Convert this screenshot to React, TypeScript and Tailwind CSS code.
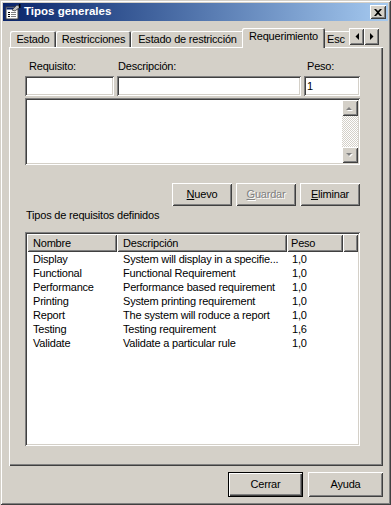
import React from 'react';

const raised =
  'shadow-[inset_1px_1px_#ffffff,inset_-1px_-1px_#404040,inset_2px_2px_#d4d0c8,inset_-2px_-2px_#808080]';
const sunken =
  'shadow-[inset_1px_1px_#808080,inset_-1px_-1px_#ffffff,inset_2px_2px_#404040,inset_-2px_-2px_#d4d0c8]';

const rows = [
  { name: 'Display', desc: 'System will display in a specifie...', peso: '1,0' },
  { name: 'Functional', desc: 'Functional Requirement', peso: '1,0' },
  { name: 'Performance', desc: 'Performance based requirement', peso: '1,0' },
  { name: 'Printing', desc: 'System printing requirement', peso: '1,0' },
  { name: 'Report', desc: 'The system will roduce a report', peso: '1,0' },
  { name: 'Testing', desc: 'Testing requirement', peso: '1,6' },
  { name: 'Validate', desc: 'Validate a particular rule', peso: '1,0' },
];

function AppIcon() {
  return (
    <svg width="16" height="16" viewBox="0 0 16 16">
      <rect x="1" y="3" width="12" height="12" fill="#ffffff" stroke="#404040" />
      <rect x="1.5" y="3.5" width="11" height="2" fill="#0a246a" />
      <rect x="3" y="8" width="2" height="1" fill="#000" />
      <rect x="6" y="8" width="5" height="1" fill="#808080" />
      <rect x="3" y="10" width="2" height="1" fill="#000" />
      <rect x="6" y="10" width="5" height="1" fill="#808080" />
      <rect x="3" y="12" width="2" height="1" fill="#000" />
      <rect x="6" y="12" width="5" height="1" fill="#808080" />
      <path d="M7 6 L12 1 L15 3 L10 7 Z" fill="#c0c0c0" stroke="#404040" strokeWidth="0.8" />
      <rect x="14" y="0" width="1.5" height="4" fill="#000" />
    </svg>
  );
}

function Tab({ label, w, active }: { label: string; w: string; active?: boolean }) {
  return (
    <div
      className={`${w} shrink-0 flex items-center justify-center whitespace-nowrap rounded-t-[2px] ${
        active
          ? 'h-[20px] -mx-[2px] -mb-[1px] relative z-10 bg-[#d4d0c8] pb-[3px] shadow-[inset_1px_1px_#ffffff,inset_-1px_0_#404040,inset_-2px_0_#808080]'
          : 'h-[16px] pt-[1px] shadow-[inset_1px_1px_#ffffff,inset_-1px_0_#404040,inset_-2px_0_#808080]'
      }`}
    >
      {label}
    </div>
  );
}

function Btn({
  children,
  w,
  h = 'h-[23px]',
  focused,
  disabled,
}: {
  children: React.ReactNode;
  w: string;
  h?: string;
  focused?: boolean;
  disabled?: boolean;
}) {
  return (
    <div
      className={`${w} ${h} flex items-center justify-center ${
        focused
          ? 'border border-black shadow-[inset_1px_1px_#ffffff,inset_-1px_-1px_#404040,inset_-2px_-2px_#808080]'
          : raised
      } ${disabled ? 'text-[#808080] [text-shadow:1px_1px_#ffffff]' : ''}`}
    >
      {children}
    </div>
  );
}

export default function App() {
  return (
    <div
      className={`w-[391px] h-[505px] bg-[#d4d0c8] p-[3px] flex flex-col text-black text-[11px] tracking-[-0.2px] font-['Liberation_Sans',Arial,sans-serif] shadow-[inset_1px_1px_#d4d0c8,inset_-1px_-1px_#404040,inset_2px_2px_#ffffff,inset_-2px_-2px_#808080]`}
    >
      {/* Title bar */}
      <div className="h-[18px] shrink-0 flex items-center bg-linear-to-r from-[#0a246a] to-[#a6caf0] pl-[2px] pr-[2px]">
        <AppIcon />
        <span className="ml-[3px] text-white font-bold text-[11.5px] tracking-normal">Tipos generales</span>
        <div className={`ml-auto w-[16px] h-[14px] bg-[#d4d0c8] flex items-center justify-center ${raised}`}>
          <svg width="8" height="7" viewBox="0 0 8 7">
            <path d="M0 0 L2 0 L4 2 L6 0 L8 0 L5 3.5 L8 7 L6 7 L4 5 L2 7 L0 7 L3 3.5 Z" fill="#000" />
          </svg>
        </div>
      </div>

      {/* Tabs */}
      <div className="mt-[7px] ml-[7px] mr-[9px] h-[19px] shrink-0 flex items-end relative z-10">
        <div className="flex-1 flex items-end overflow-hidden h-[20px] -mb-[1px] pb-[1px]">
          <Tab label="Estado" w="w-[46px]" />
          <Tab label="Restricciones" w="w-[75px]" />
          <Tab label="Estado de restricción" w="w-[113px]" />
          <Tab label="Requerimiento" w="w-[83px]" active />
          <div className="w-[60px] h-[16px] shrink-0 pl-[4px] pt-[1px] flex items-center whitespace-nowrap shadow-[inset_1px_1px_#ffffff]">
            Esc
          </div>
        </div>
        <div className="self-start flex">
          <div className={`w-[15px] h-[17px] flex items-center justify-center bg-[#d4d0c8] ${raised}`}>
            <svg width="4" height="7" viewBox="0 0 4 7">
              <path d="M4 0 L4 7 L0.5 3.5 Z" fill="#000" />
            </svg>
          </div>
          <div className={`w-[15px] h-[17px] flex items-center justify-center bg-[#d4d0c8] ${raised}`}>
            <svg width="4" height="7" viewBox="0 0 4 7">
              <path d="M0 0 L0 7 L3.5 3.5 Z" fill="#000" />
            </svg>
          </div>
        </div>
      </div>

      {/* Tab panel */}
      <div className="ml-[6px] mr-[5px] h-[419px] shrink-0 pt-[12px] pl-[16px] pr-[23px] flex flex-col shadow-[inset_1px_1px_#ffffff,inset_-1px_-1px_#404040,inset_-2px_-2px_#808080]">
        <div className="flex gap-[3px] h-[14px] leading-[14px]">
          <div className="w-[89px] pl-[4px]">Requisito:</div>
          <div className="w-[184px] pl-[1px]">Descripción:</div>
          <div className="w-[56px] pl-[3px]">Peso:</div>
        </div>
        <div className="mt-[3px] flex gap-[3px]">
          <div className={`w-[89px] h-[20px] bg-white ${sunken}`} />
          <div className={`w-[184px] h-[20px] bg-white ${sunken}`} />
          <div className={`w-[56px] h-[20px] bg-white pl-[3px] flex items-center ${sunken}`}>1</div>
        </div>
        <div className={`mt-[2px] h-[67px] bg-white flex justify-end p-[2px] ${sunken}`}>
          <div className="w-[16px] flex flex-col bg-[repeating-conic-gradient(#ffffff_0_25%,#d4d0c8_0_50%)] bg-[length:2px_2px]">
            <div className={`h-[16px] bg-[#d4d0c8] flex items-center justify-center ${raised}`}>
              <svg width="8" height="5" viewBox="0 0 8 5">
                <path d="M1 5 L7 5 L4 2 Z" fill="#ffffff" />
                <path d="M0 4 L6 4 L3 1 Z" fill="#808080" />
              </svg>
            </div>
            <div className="flex-1" />
            <div className={`h-[16px] bg-[#d4d0c8] flex items-center justify-center ${raised}`}>
              <svg width="8" height="5" viewBox="0 0 8 5">
                <path d="M1 1 L7 1 L4 4 Z" fill="#ffffff" />
                <path d="M0 0 L6 0 L3 3 Z" fill="#808080" />
              </svg>
            </div>
          </div>
        </div>

        <div className="mt-[18px] flex justify-end gap-[4px]">
          <Btn w="w-[60px]">
            <span>
              <u>N</u>uevo
            </span>
          </Btn>
          <Btn w="w-[60px]" disabled>
            <span>
              <u>G</u>uardar
            </span>
          </Btn>
          <Btn w="w-[60px]">
            <span>
              <u>E</u>liminar
            </span>
          </Btn>
        </div>

        <div className="mt-[2px] h-[14px] leading-[14px] pl-[1px]">Tipos de requisitos definidos</div>

        <div className={`mt-[10px] h-[214px] bg-white p-[2px] flex flex-col ${sunken}`}>
          <div className="flex h-[18px] shrink-0">
            <div className={`w-[90px] pl-[6px] flex items-center bg-[#d4d0c8] ${raised}`}>Nombre</div>
            <div className={`w-[170px] pl-[6px] flex items-center bg-[#d4d0c8] ${raised}`}>Descripción</div>
            <div className={`w-[56px] pl-[4px] flex items-center bg-[#d4d0c8] ${raised}`}>Peso</div>
            <div className={`flex-1 bg-[#d4d0c8] ${raised}`} />
          </div>
          {rows.map((r) => (
            <div key={r.name} className="flex h-[14px] leading-[14px] whitespace-nowrap">
              <div className="w-[90px] pl-[6px]">{r.name}</div>
              <div className="w-[170px] pl-[6px] overflow-hidden">{r.desc}</div>
              <div className="w-[56px] pl-[5px]">{r.peso}</div>
            </div>
          ))}
        </div>
      </div>

      {/* Bottom buttons */}
      <div className="mt-[6px] mr-[5px] flex justify-end gap-[5px]">
        <Btn w="w-[75px]" h="h-[25px]" focused>
          Cerrar
        </Btn>
        <Btn w="w-[75px]" h="h-[25px]">
          Ayuda
        </Btn>
      </div>
    </div>
  );
}
